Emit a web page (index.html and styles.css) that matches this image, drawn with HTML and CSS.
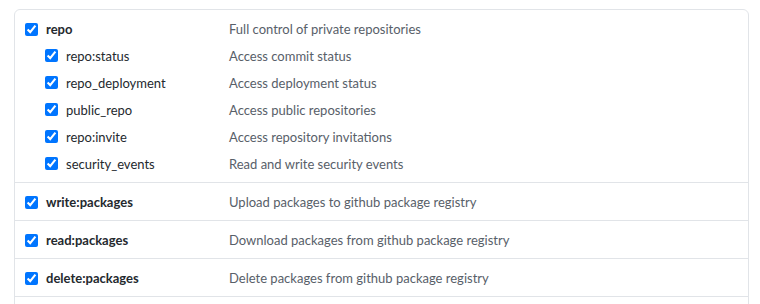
FILE: index.html
```html
<!DOCTYPE html>
<html lang="en">
<head>
    <meta charset="UTF-8">
    <meta name="viewport" content="width=device-width, initial-scale=1.0">
    <title>Token scopes</title>
    <link rel="stylesheet" href="styles.css">
</head>
<body>
    <div class="scopes">
        <div class="scope-group">
            <label class="scope top">
                <span class="name"><input type="checkbox" checked> repo</span>
                <span class="desc">Full control of private repositories</span>
            </label>
            <label class="scope sub">
                <span class="name"><input type="checkbox" checked> repo:status</span>
                <span class="desc">Access commit status</span>
            </label>
            <label class="scope sub">
                <span class="name"><input type="checkbox" checked> repo_deployment</span>
                <span class="desc">Access deployment status</span>
            </label>
            <label class="scope sub">
                <span class="name"><input type="checkbox" checked> public_repo</span>
                <span class="desc">Access public repositories</span>
            </label>
            <label class="scope sub">
                <span class="name"><input type="checkbox" checked> repo:invite</span>
                <span class="desc">Access repository invitations</span>
            </label>
            <label class="scope sub">
                <span class="name"><input type="checkbox" checked> security_events</span>
                <span class="desc">Read and write security events</span>
            </label>
        </div>
        <div class="scope-group">
            <label class="scope top">
                <span class="name"><input type="checkbox" checked> write:packages</span>
                <span class="desc">Upload packages to github package registry</span>
            </label>
        </div>
        <div class="scope-group">
            <label class="scope top">
                <span class="name"><input type="checkbox" checked> read:packages</span>
                <span class="desc">Download packages from github package registry</span>
            </label>
        </div>
        <div class="scope-group">
            <label class="scope top">
                <span class="name"><input type="checkbox" checked> delete:packages</span>
                <span class="desc">Delete packages from github package registry</span>
            </label>
        </div>
        <div class="scope-group more"></div>
    </div>
</body>
</html>
```

FILE: styles.css
```css
body {
    margin: 9px 11px 0 14px;
    font-family: Lato, "Liberation Sans", sans-serif;
    font-size: 13px;
    color: #24292e;
    background: #fff;
}
.scopes {
    border: 1px solid #e1e4e8;
    border-radius: 6px;
}
.scope-group {
    padding: 10px 0 5px 10px;
    border-bottom: 1px solid #e1e4e8;
}
.scope-group:last-child {
    border-bottom: none;
}
.scope-group.more {
    height: 20px;
}
.scope {
    display: grid;
    grid-template-columns: 204px 1fr;
    align-items: center;
}
.scope.top {
    height: 18px;
    margin-bottom: 4px;
}
.scope.top .name {
    font-weight: bold;
}
.scope.sub {
    height: 27px;
}
.scope.sub .name {
    padding-left: 20px;
}
.name {
    display: flex;
    align-items: center;
    gap: 8px;
}
.name input {
    margin: 0;
    width: 13px;
    height: 13px;
}
.desc {
    color: #586069;
}
```
